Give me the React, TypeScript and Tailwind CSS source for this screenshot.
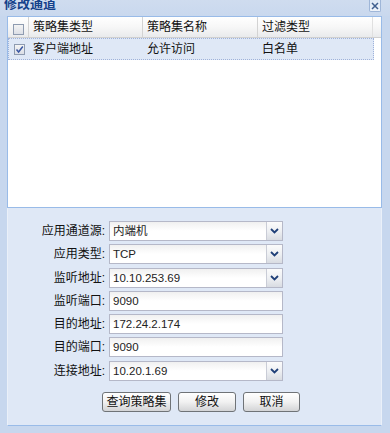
import React from "react";

function Chevron() {
  return (
    <svg width="9" height="6" viewBox="0 0 9 6">
      <path d="M1 1 L4.5 4.5 L8 1" fill="none" stroke="#1f3f78" strokeWidth="1.8" />
    </svg>
  );
}

function CheckBox({ checked }: { checked?: boolean }) {
  return (
    <div className="w-[11px] h-[11px] border border-[#8e9bb0] bg-gradient-to-b from-[#f4f4f4] to-[#dcdfe6] flex items-center justify-center">
      {checked && (
        <svg width="9" height="9" viewBox="0 0 9 9">
          <path d="M1.5 4.5 L3.6 7 L7.8 1.5" fill="none" stroke="#3a57a3" strokeWidth="1.5" />
        </svg>
      )}
    </div>
  );
}

function Field({ label, value, combo }: { label: string; value: string; combo?: boolean }) {
  return (
    <div className="flex items-center h-[20px]">
      <div className="w-[98px] text-right text-[12px] leading-[20px] text-[#111] pr-[1px]">{label}:</div>
      <div className="ml-[3px] w-[174px] h-[20px] flex border border-[#b5b8c8] bg-white">
        <div className="flex-1 h-full bg-gradient-to-b from-[#f0f0f0] via-white to-white pl-[3px] text-[11.5px] leading-[18px] text-[#222]">
          {value}
        </div>
        {combo && (
          <div className="w-[16px] h-full border-l border-[#c9ccd6] bg-gradient-to-b from-[#fbfbfb] via-[#eef0f3] to-[#d9dce2] flex items-center justify-center">
            <Chevron />
          </div>
        )}
      </div>
    </div>
  );
}

function Btn({ children, w }: { children: React.ReactNode; w: string }) {
  return (
    <div
      className={`${w} h-[20px] rounded-[3px] border border-[#6f7377] bg-gradient-to-b from-white via-[#f1f1f1] to-[#d3d4d6] flex items-center justify-center text-[12px] text-[#111] leading-none`}
    >
      {children}
    </div>
  );
}

export default function App() {
  return (
    <div className="w-[390px] h-[433px] overflow-hidden bg-[#c7d7ee] flex flex-col font-['Liberation_Sans','Noto_Sans_CJK_SC',sans-serif]">
      {/* title bar */}
      <div className="h-[16px] flex items-start justify-between pl-[4px] pr-[9px] bg-gradient-to-b from-[#cfdcef] to-[#c9d8ee]">
        <span className="text-[13px] font-bold text-[#15428b] leading-[13px] -mt-[3px]">修改通道</span>
        <div className="w-[12px] h-[12px] border border-t-0 border-[#9fb6d8] rounded-b-[2px] bg-gradient-to-b from-[#dfe9f6] to-[#eef3fa] flex items-center justify-center">
          <svg width="8" height="8" viewBox="0 0 8 8">
            <path d="M1 1 L7 7 M7 1 L1 7" stroke="#3f5f8f" strokeWidth="1.5" />
          </svg>
        </div>
      </div>

      <div className="flex-1 flex flex-col pl-[7px] pr-[8px] pb-[7px]">
        {/* grid */}
        <div className="h-[192px] border border-[#99bbe8] bg-white flex flex-col">
          <div className="h-[21px] flex bg-gradient-to-b from-white via-[#f7f7f7] to-[#e9eaec] border-b border-[#d0d0d0] text-[12px] text-[#111]">
            <div className="w-[21px] flex items-end justify-center pb-[2px] border-r border-[#d3d3d3]">
              <CheckBox />
            </div>
            <div className="w-[114px] pl-[4px] flex items-center border-r border-[#d3d3d3]">策略集类型</div>
            <div className="w-[115px] pl-[4px] flex items-center border-r border-[#d3d3d3]">策略集名称</div>
            <div className="w-[115px] pl-[4px] flex items-center border-r border-[#e0e0e0]">过滤类型</div>
            <div className="flex-1"></div>
          </div>
          <div className="h-[22px] flex">
            <div className="w-[366px] flex bg-[#dfe8f6] border border-dotted border-[#9fb2da] text-[12px] text-[#111]">
              <div className="w-[20px] flex items-center justify-center">
                <CheckBox checked />
              </div>
              <div className="w-[114px] pl-[4px] flex items-center">客户端地址</div>
              <div className="w-[115px] pl-[4px] flex items-center">允许访问</div>
              <div className="w-[115px] pl-[4px] flex items-center">白名单</div>
            </div>
          </div>
        </div>

        {/* form */}
        <div className="flex-1 bg-[#dfe8f6] border-l border-r border-l-[#eaf0f9] border-r-[#eaf0f9] border-b border-b-[#99bbe8] pt-[13px] flex flex-col">
          <div className="flex flex-col gap-[3.3px]">
            <Field label="应用通道源" value="内端机" combo />
            <Field label="应用类型" value="TCP" combo />
            <Field label="监听地址" value="10.10.253.69" combo />
            <Field label="监听端口" value="9090" />
            <Field label="目的地址" value="172.24.2.174" />
            <Field label="目的端口" value="9090" />
            <Field label="连接地址" value="10.20.1.69" combo />
          </div>
          <div className="mt-[11px] pl-[94px] flex gap-[7px]">
            <Btn w="w-[69px]">查询策略集</Btn>
            <Btn w="w-[58px]">修改</Btn>
            <Btn w="w-[57px]">取消</Btn>
          </div>
        </div>
      </div>
    </div>
  );
}
